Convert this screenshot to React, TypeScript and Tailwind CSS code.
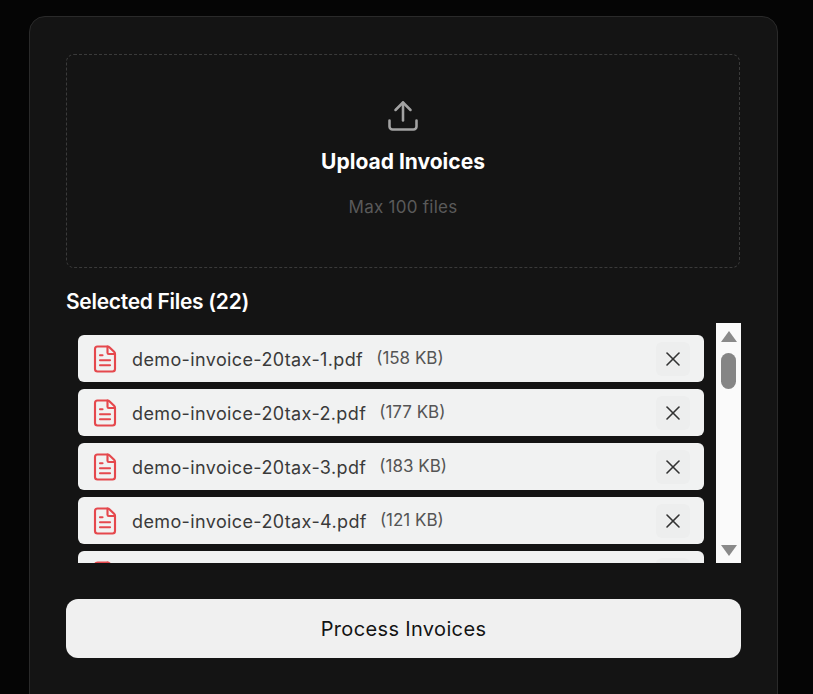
import { FileText, Upload, X } from "lucide-react";

const FILES = [
  { name: "demo-invoice-20tax-1.pdf", size: "158 KB" },
  { name: "demo-invoice-20tax-2.pdf", size: "177 KB" },
  { name: "demo-invoice-20tax-3.pdf", size: "183 KB" },
  { name: "demo-invoice-20tax-4.pdf", size: "121 KB" },
  { name: "demo-invoice-20tax-5.pdf", size: "164 KB" },
];

function FileRow({ name, size }: { name: string; size: string }) {
  return (
    <div className="flex h-[47px] shrink-0 items-center rounded-md bg-[#f1f2f2] pt-[1px] pl-[13px] pr-[14px]">
      <FileText size={30} strokeWidth={1.7} className="-ml-[1px] shrink-0 text-[#e5484d]" />
      <span className="ml-[12px] text-[18px] tracking-[0.38px] text-[#3a3a3a]">{name}</span>
      <span className="ml-[13px] text-[17px] text-[#555555]">({size})</span>
      <button className="ml-auto flex h-[34px] w-[34px] items-center justify-center rounded-md bg-[#edeeee] text-[#333333]">
        <X size={24} strokeWidth={1.6} />
      </button>
    </div>
  );
}

export default function App() {
  return (
    <div
      className="h-[694px] overflow-hidden bg-[#050505] pt-4 pl-[29px] pr-[35px]"
      style={{ fontFamily: "Inter, 'Liberation Sans', sans-serif" }}
    >
      <div className="h-[700px] rounded-t-2xl border border-[#2a2a2a] bg-[#141414] px-9 pt-[37px]">
        {/* Drop zone */}
        <div className="flex h-[214px] w-[674px] flex-col items-center rounded-lg border border-dashed border-[#3a3a3a] pt-[43px]">
          <Upload size={36} strokeWidth={1.7} className="text-[#a3a3a3]" />
          <h2 className="mt-[12px] text-[21px] font-bold text-white">Upload Invoices</h2>
          <p className="mt-[17px] text-[17px] tracking-[0.25px] text-[#5a5a5a]">Max 100 files</p>
        </div>

        <h3 className="mt-[21px] text-[21px] leading-[26px] font-semibold tracking-[-0.3px] text-white">
          Selected Files (22)
        </h3>

        {/* File list with scrollbar */}
        <div className="mt-[8px] flex h-[240px] w-[675px]">
          <div className="flex flex-1 flex-col gap-[7px] overflow-hidden px-3 pt-3">
            {FILES.map((f) => (
              <FileRow key={f.name} name={f.name} size={f.size} />
            ))}
          </div>
          <div className="flex w-[25px] shrink-0 flex-col items-center bg-[#fafafa] pt-2 pb-[7px]">
            <div className="h-0 w-0 border-x-[8px] border-b-[11px] border-x-transparent border-b-[#8a8a8a]" />
            <div className="mt-[11px] h-[36px] w-[15px] rounded-full bg-[#858585]" />
            <div className="mt-auto h-0 w-0 border-x-[8px] border-t-[11px] border-x-transparent border-t-[#8a8a8a]" />
          </div>
        </div>

        <button className="mt-9 flex h-[59px] w-[675px] items-center justify-center rounded-xl bg-[#f0f0f0] text-[20px] tracking-[0.35px] text-[#141414]">
          Process Invoices
        </button>
      </div>
    </div>
  );
}
